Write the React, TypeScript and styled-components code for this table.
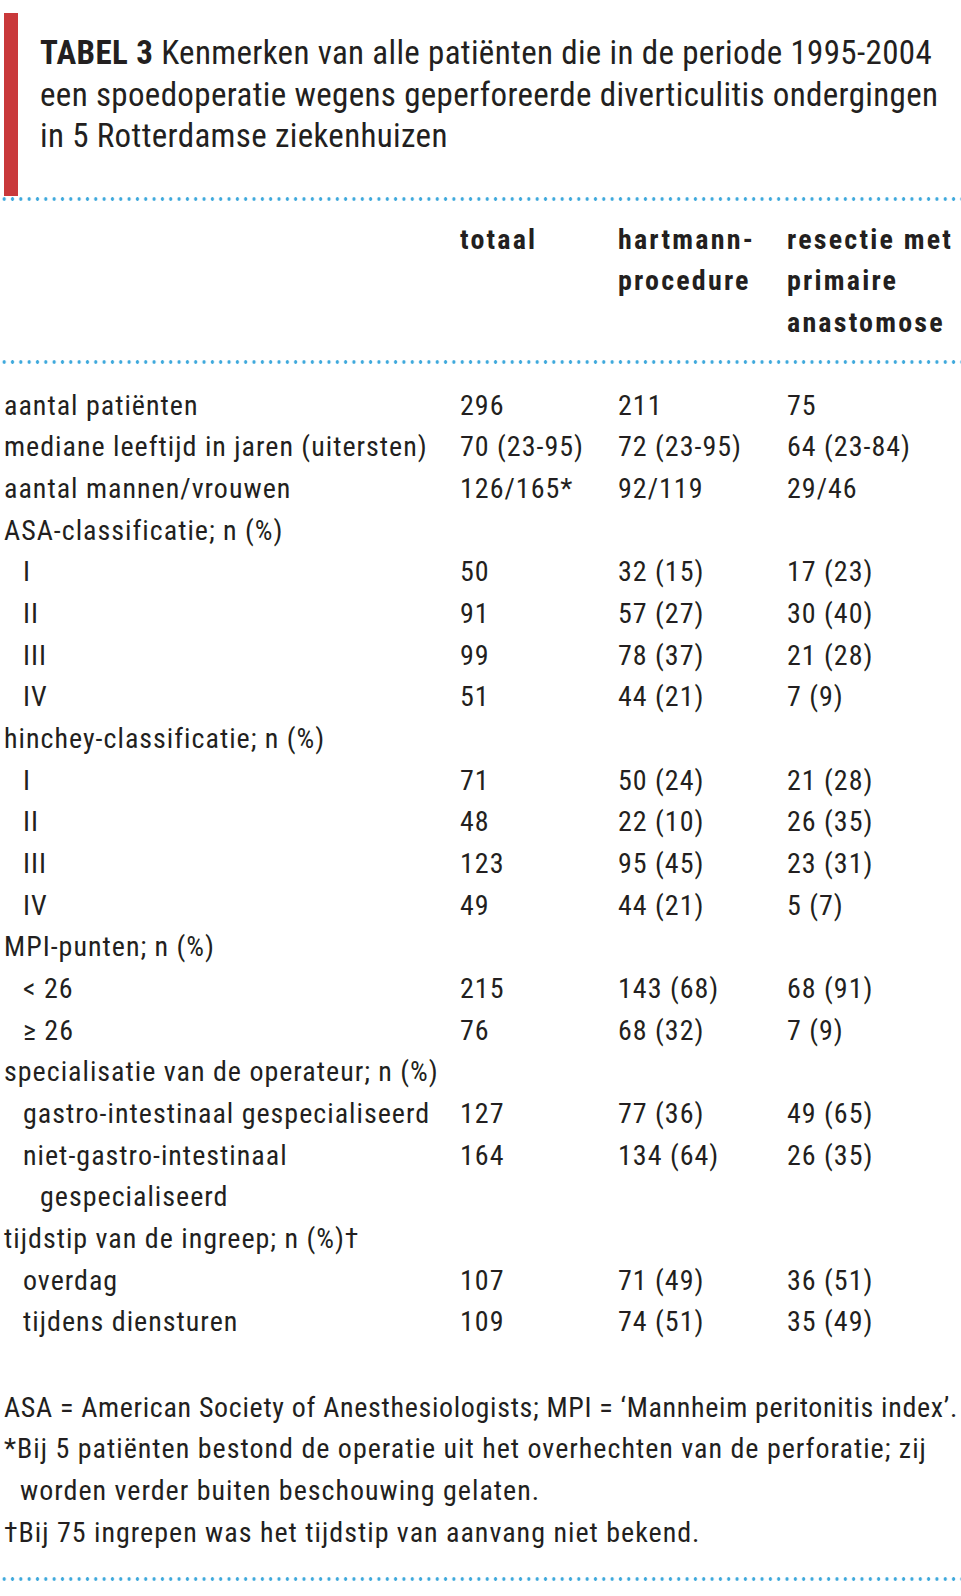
import { Fragment } from "react";
import styled, { createGlobalStyle } from "styled-components";

const Global = createGlobalStyle`
  body {
    margin: 0;
    background: #fff;
    color: #231f20;
    font-family: "Roboto", "Liberation Sans", sans-serif;
    font-stretch: 75%;
  }
`;

const Page = styled.div`
  width: 961px;
  padding-top: 13px;
  box-sizing: border-box;
`;

const TitleBlock = styled.div`
  margin-left: 4px;
  border-left: 14px solid #c9393b;
  padding: 19px 0 39px 22px;
  font-size: 33px;
  letter-spacing: 0.35px;
  line-height: 41.6px;
  white-space: nowrap;
  b { font-weight: 700; letter-spacing: 0.4px; }
`;

const DotRule = styled.div<{ $mt: number }>`
  margin-top: ${(p) => p.$mt}px;
  height: 4px;
  background-image: radial-gradient(circle, #3fa9dc 1.5px, transparent 2px);
  background-size: 8.33px 4px;
  background-repeat: repeat-x;
`;

const Grid = styled.div<{ $mt: number }>`
  margin-top: ${(p) => p.$mt}px;
  padding-left: 4px;
  display: grid;
  grid-template-columns: 456px 158px 169px 1fr;
  font-size: 28px;
  letter-spacing: 1px;
  line-height: 41.65px;
  white-space: nowrap;
`;

const HeadCell = styled.div`
  font-weight: 700;
  letter-spacing: 2.2px;
`;

const Label = styled.div<{ $level: number }>`
  padding-left: ${(p) => (p.$level === 0 ? 0 : 19)}px;
`;

const Continued = styled.div`
  padding-left: 17px;
`;

const Value = styled.div``;

const Notes = styled.div`
  margin-top: 44px;
  padding-left: 4px;
  font-size: 28px;
  line-height: 41.6px;
  white-space: nowrap;
`;

const Note = styled.div<{ $hang?: boolean; $tight?: boolean }>`
  padding-left: ${(p) => (p.$hang ? 16 : 0)}px;
  text-indent: ${(p) => (p.$hang ? -16 : 0)}px;
  letter-spacing: ${(p) => (p.$tight ? 0.68 : 1)}px;
`;

type Row = { label: string; level: number; cont?: string; v?: [string, string, string] };

const rows: Row[] = [
  { label: "aantal patiënten", level: 0, v: ["296", "211", "75"] },
  { label: "mediane leeftijd in jaren (uitersten)", level: 0, v: ["70 (23-95)", "72 (23-95)", "64 (23-84)"] },
  { label: "aantal mannen/vrouwen", level: 0, v: ["126/165*", "92/119", "29/46"] },
  { label: "ASA-classificatie; n (%)", level: 0 },
  { label: "I", level: 1, v: ["50", "32 (15)", "17 (23)"] },
  { label: "II", level: 1, v: ["91", "57 (27)", "30 (40)"] },
  { label: "III", level: 1, v: ["99", "78 (37)", "21 (28)"] },
  { label: "IV", level: 1, v: ["51", "44 (21)", "7 (9)"] },
  { label: "hinchey-classificatie; n (%)", level: 0 },
  { label: "I", level: 1, v: ["71", "50 (24)", "21 (28)"] },
  { label: "II", level: 1, v: ["48", "22 (10)", "26 (35)"] },
  { label: "III", level: 1, v: ["123", "95 (45)", "23 (31)"] },
  { label: "IV", level: 1, v: ["49", "44 (21)", "5 (7)"] },
  { label: "MPI-punten; n (%)", level: 0 },
  { label: "< 26", level: 1, v: ["215", "143 (68)", "68 (91)"] },
  { label: "≥ 26", level: 1, v: ["76", "68 (32)", "7 (9)"] },
  { label: "specialisatie van de operateur; n (%)", level: 0 },
  { label: "gastro-intestinaal gespecialiseerd", level: 1, v: ["127", "77 (36)", "49 (65)"] },
  { label: "niet-gastro-intestinaal", level: 1, cont: "gespecialiseerd", v: ["164", "134 (64)", "26 (35)"] },
  { label: "tijdstip van de ingreep; n (%)†", level: 0 },
  { label: "overdag", level: 1, v: ["107", "71 (49)", "36 (51)"] },
  { label: "tijdens diensturen", level: 1, v: ["109", "74 (51)", "35 (49)"] },
];

export default function App() {
  return (
    <>
      <Global />
      <Page>
        <TitleBlock>
          <b>TABEL 3</b> Kenmerken van alle patiënten die in de periode 1995-2004
          <br />
          een spoedoperatie wegens geperforeerde diverticulitis ondergingen
          <br />
          in 5 Rotterdamse ziekenhuizen
        </TitleBlock>
        <DotRule $mt={1} />
        <Grid $mt={18}>
          <HeadCell />
          <HeadCell>totaal</HeadCell>
          <HeadCell>
            hartmann-
            <br />
            procedure
          </HeadCell>
          <HeadCell>
            resectie met
            <br />
            primaire
            <br />
            anastomose
          </HeadCell>
        </Grid>
        <DotRule $mt={16} />
        <Grid $mt={21}>
          {rows.map((r, i) => (
            <Fragment key={i}>
              <Label $level={r.level}>
                {r.label}
                {r.cont && <Continued>{r.cont}</Continued>}
              </Label>
              <Value>{r.v ? r.v[0] : ""}</Value>
              <Value>{r.v ? r.v[1] : ""}</Value>
              <Value>{r.v ? r.v[2] : ""}</Value>
            </Fragment>
          ))}
        </Grid>
        <Notes>
          <Note $tight>ASA = American Society of Anesthesiologists; MPI = ‘Mannheim peritonitis index’.</Note>
          <Note $hang>
            *Bij 5 patiënten bestond de operatie uit het overhechten van de perforatie; zij
            <br />
            worden verder buiten beschouwing gelaten.
          </Note>
          <Note>†Bij 75 ingrepen was het tijdstip van aanvang niet bekend.</Note>
        </Notes>
        <DotRule $mt={24} />
      </Page>
    </>
  );
}
